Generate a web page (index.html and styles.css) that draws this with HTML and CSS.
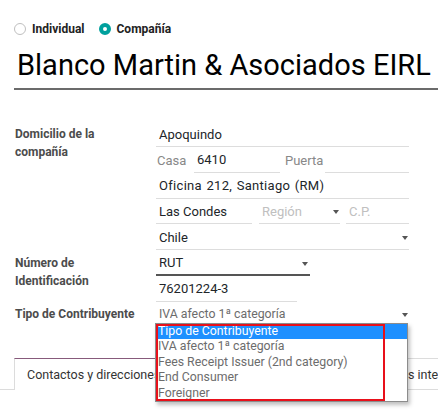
FILE: index.html
```html
<!DOCTYPE html>
<html lang="es">
<head>
<meta charset="utf-8">
<link rel="stylesheet" href="styles.css">
</head>
<body>
<div class="page">
  <div class="radios">
    <span class="radio"><span class="dot"></span><span class="rlabel">Individual</span></span>
    <span class="radio"><span class="dot checked"></span><span class="rlabel">Compañía</span></span>
  </div>
  <h1 class="title">Blanco Martin &amp; Asociados EIRL</h1>

  <div class="group">
    <div class="row">
      <div class="label">Domicilio de la<br>compañía</div>
      <div class="fields">
        <div class="line"><span class="input grow">Apoquindo</span></div>
        <div class="line">
          <span class="ph casa">Casa</span><span class="input num">6410</span>
          <span class="ph puerta">Puerta</span><span class="input grow"></span>
        </div>
        <div class="line"><span class="input grow wide">Oficina 212, Santiago (RM)</span></div>
        <div class="line">
          <span class="input city">Las Condes</span>
          <span class="input select region"><span class="muted">Región</span><span class="caret"></span></span>
          <span class="input grow"><span class="muted">C.P.</span></span>
        </div>
        <div class="line"><span class="input select grow">Chile<span class="caret"></span></span></div>
      </div>
    </div>
    <div class="row">
      <div class="label">Número de<br>Identificación</div>
      <div class="fields">
        <div class="line"><span class="input select rut">RUT<span class="caret"></span></span></div>
        <div class="line"><span class="input vat">76201224-3</span></div>
      </div>
    </div>
    <div class="row">
      <div class="label">Tipo de Contribuyente</div>
      <div class="fields">
        <div class="line"><span class="input select grow nobor"><span class="gray">IVA afecto 1ª categoría</span><span class="caret"></span></span></div>
      </div>
    </div>
  </div>

  <div class="tabs">
    <div class="tab active">Contactos y direcciones</div>
    <div class="tab hidden">Ventas y compras</div>
    <div class="tab other">Notas internas</div>
  </div>

  <div class="listbox">
    <div class="opt sel">Tipo de Contribuyente</div>
    <div class="opt">IVA afecto 1ª categoría</div>
    <div class="opt">Fees Receipt Issuer (2nd category)</div>
    <div class="opt">End Consumer</div>
    <div class="opt">Foreigner</div>
  </div>
  <div class="annot"></div>
</div>
</body>
</html>
```
FILE: styles.css
```css
html, body {
  margin: 0;
  padding: 0;
  background: #fff;
  overflow: hidden;
}
body {
  font-family: Roboto, "Liberation Sans", sans-serif;
  color: #212529;
  font-size: 13px;
}
.page {
  position: relative;
  width: 438px;
  height: 413px;
  padding: 20px 0 0 14px;
  box-sizing: border-box;
  overflow: hidden;
}
.radios {
  display: flex;
  align-items: center;
  height: 18px;
  gap: 14px;
}
.radio {
  display: flex;
  align-items: center;
  gap: 6px;
}
.dot {
  width: 12px;
  height: 12px;
  border-radius: 50%;
  border: 1px solid #bfbfbf;
  box-sizing: border-box;
  background: #fff;
}
.dot.checked {
  border: 4px solid #00a09d;
  background: #fff;
}
.rlabel {
  font-weight: 700;
  font-size: 12px;
  color: #222;
}
.title {
  margin: 8px -20px 0 0;
  padding: 0 0 4px 3px;
  font-size: 29px;
  line-height: 38px;
  font-weight: 400;
  color: #000;
  border-bottom: 2px solid #6b6b6b;
  white-space: nowrap;
}
.group {
  margin-top: 32px;
  display: flex;
  flex-direction: column;
}
.row {
  display: flex;
}
.label {
  width: 141px;
  padding-left: 1px;
  font-weight: 700;
  font-size: 12px;
  color: #4c4c4c;
  line-height: 18px;
  padding-top: 3px;
}
.fields {
  width: 253px;
  display: flex;
  flex-direction: column;
}
.line {
  display: flex;
  align-items: flex-end;
  height: 25px;
  margin-bottom: 0.75px;
}
.input {
  position: relative;
  display: flex;
  align-items: center;
  height: 25px;
  box-sizing: border-box;
  border-bottom: 1px solid #ddd;
  padding: 0 3px;
  color: #212529;
  white-space: nowrap;
}
.wide { letter-spacing: 0.3px; word-spacing: 1px; }
.grow { flex: 1; }
.ph {
  display: flex;
  align-items: center;
  height: 25px;
  color: #888;
}
.casa { width: 37px; padding-left: 1px; }
.num { width: 86px; }
.puerta { width: 40px; padding-left: 5px; }
.city { width: 96px; }
.region { width: 81px; margin-left: 7px; }
.grow + .grow, .region + .grow { margin-left: 6px; }
.muted { color: #c0c0c0; }
.gray { color: #6c6c6c; font-size: 12.3px; }
.select .caret {
  position: absolute;
  right: 1px;
  top: 11px;
  width: 0;
  height: 0;
  border-left: 3.5px solid transparent;
  border-right: 3.5px solid transparent;
  border-top: 4px solid #555;
}
.rut {
  width: 154px;
  border-bottom: 2px solid #555;
}
.rut .caret { right: 2px; }
.vat { width: 141px; }
.nobor { border-bottom-color: transparent; }

.tabs {
  position: absolute;
  left: 0;
  top: 358px;
  width: 438px;
  display: flex;
  border-bottom: 1px solid #dcdcdc;
  padding-left: 14px;
  box-sizing: border-box;
  height: 32px;
}
.tab {
  flex: none;
  height: 31px;
  box-sizing: border-box;
  padding: 0 12px;
  display: flex;
  align-items: center;
  font-size: 12.5px;
  color: #333;
  white-space: nowrap;
  border-top: 1px solid #dcdcdc;
}
.tab.active {
  width: 154px;
  border-top: 1px solid #875a7b;
  border-left: 1px solid #dcdcdc;
  border-right: 1px solid #dcdcdc;
  background: #fff;
  height: 32px;
  margin-bottom: -1px;
}
.tab.hidden { width: 201px; }

.listbox {
  position: absolute;
  left: 155px;
  top: 323px;
  width: 253px;
  height: 79px;
  box-sizing: border-box;
  border: 1px solid #8c8c8c;
  background: #fff;
  box-shadow: 2px 3px 4px rgba(0, 0, 0, 0.25);
  font-size: 12.3px;
}
.opt {
  height: 15.5px;
  line-height: 15.5px;
  padding-left: 2px;
  color: #6c6c6c;
  white-space: nowrap;
}
.opt.sel {
  height: 15px;
  line-height: 15px;
  background: #1e90ff;
  color: #fff;
}
.annot {
  position: absolute;
  left: 156px;
  top: 324px;
  width: 229px;
  height: 77px;
  box-sizing: border-box;
  border: 2px solid #e8101a;
}
```
